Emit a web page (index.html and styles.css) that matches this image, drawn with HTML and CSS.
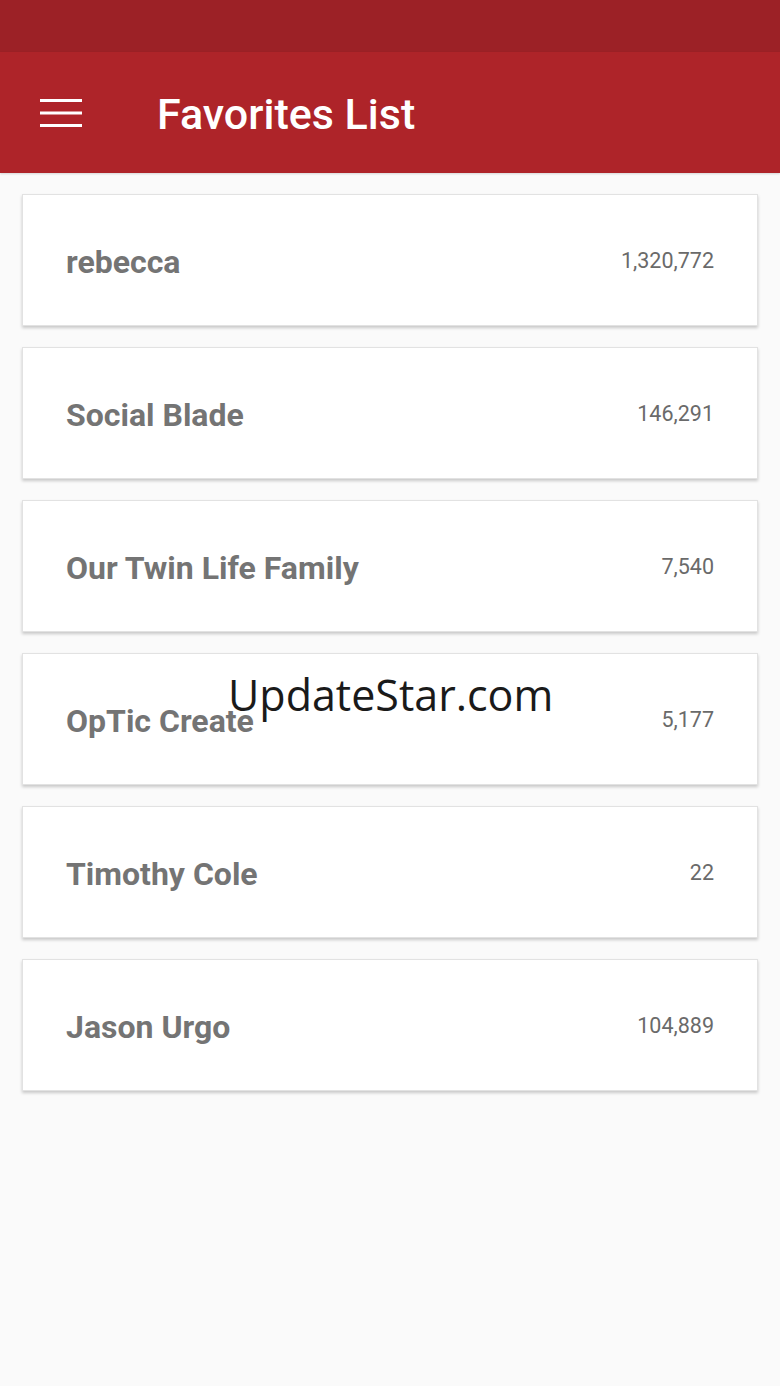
FILE: index.html
```html
<!DOCTYPE html>
<html lang="en">
<head>
  <meta charset="UTF-8">
  <meta name="viewport" content="width=device-width, initial-scale=1.0">
  <title>Favorites List</title>
  <link rel="stylesheet" href="styles.css">
</head>
<body>
  <div class="status-bar"></div>

  <header class="app-bar">
    <button class="menu-btn" aria-label="Menu">
      <svg width="42" height="30" viewBox="0 0 42 30">
        <rect x="0" y="1" width="42" height="3" fill="#fff"/>
        <rect x="0" y="13.5" width="42" height="3" fill="#fff"/>
        <rect x="0" y="26" width="42" height="3" fill="#fff"/>
      </svg>
    </button>
    <h1>Favorites List</h1>
  </header>

  <ul class="fav-list">
    <li class="fav-card"><span class="fav-name">rebecca</span><span class="fav-count">1,320,772</span></li>
    <li class="fav-card"><span class="fav-name">Social Blade</span><span class="fav-count">146,291</span></li>
    <li class="fav-card"><span class="fav-name">Our Twin Life Family</span><span class="fav-count">7,540</span></li>
    <li class="fav-card"><span class="fav-name">OpTic Create</span><span class="fav-count">5,177</span></li>
    <li class="fav-card"><span class="fav-name">Timothy Cole</span><span class="fav-count">22</span></li>
    <li class="fav-card"><span class="fav-name">Jason Urgo</span><span class="fav-count">104,889</span></li>
  </ul>

  <div class="watermark">UpdateStar.com</div>
</body>
</html>
```

FILE: styles.css
```css
body {
  margin: 0;
  padding: 0;
  background: #fafafa;
  font-family: Roboto, "Liberation Sans", Arial, sans-serif;
  width: 780px;
  height: 1386px;
  position: relative;
  overflow: hidden;
}

.status-bar {
  height: 52px;
  background: #9c2126;
}

.app-bar {
  height: 121px;
  background: #ae2429;
  display: flex;
  align-items: center;
  box-shadow: 0 1px 2px rgba(0, 0, 0, 0.15);
}

.menu-btn {
  background: none;
  border: none;
  padding: 0;
  margin-left: 40px;
  width: 42px;
  height: 30px;
  display: flex;
}

.app-bar h1 {
  margin: 2px 0 0 75px;
  color: #fff;
  font-size: 43px;
  font-weight: 500;
}

.fav-list {
  list-style: none;
  margin: 0;
  padding: 21px 22px 0;
  display: flex;
  flex-direction: column;
  gap: 21px;
}

.fav-card {
  height: 132px;
  background: #fff;
  border: 1px solid #e2e2e2;
  box-sizing: border-box;
  box-shadow: 0 2px 3px rgba(0, 0, 0, 0.2);
  display: flex;
  align-items: center;
  justify-content: space-between;
  padding: 0 43px 0 43px;
}

.fav-name {
  color: #747474;
  font-size: 32px;
  font-weight: 700;
  margin-top: 4px;
}

.fav-count {
  color: #6a6a6a;
  font-size: 21.5px;
  margin-top: 0;
}

.watermark {
  position: absolute;
  left: 228px;
  top: 667px;
  font-family: "Open Sans", "Noto Sans", sans-serif;
  font-size: 43px;
  color: #1a1a1a;
  line-height: 56px;
}
```
